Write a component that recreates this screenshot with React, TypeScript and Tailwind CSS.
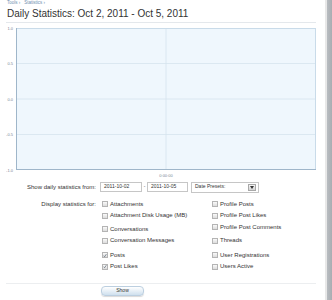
import { Fragment } from 'react';

type Stat = { label: string; checked?: boolean; gap?: string };

const leftStats: Stat[] = [
  { label: 'Attachments' },
  { label: 'Attachment Disk Usage (MB)' },
  { label: 'Conversations', gap: 'mt-[2px]' },
  { label: 'Conversation Messages' },
  { label: 'Posts', checked: true, gap: 'mt-[3px]' },
  { label: 'Post Likes', checked: true },
];

const rightStats: Stat[] = [
  { label: 'Profile Posts' },
  { label: 'Profile Post Likes' },
  { label: 'Profile Post Comments' },
  { label: 'Threads', gap: 'mt-[2px]' },
  { label: 'User Registrations', gap: 'mt-[3px]' },
  { label: 'Users Active' },
];

const yTicks = [
  { label: '1.0', y: 5 },
  { label: '0.5', y: 40.5 },
  { label: '0.0', y: 76 },
  { label: '-0.5', y: 111.5 },
  { label: '-1.0', y: 147 },
];

const Checkbox = ({ checked }: { checked?: boolean }) => (
  <span className="flex h-[6px] w-[6px] shrink-0 items-center justify-center border border-[#b4b4b4] bg-gradient-to-b from-[#fafafa] to-[#dcdcdc]">
    {checked && (
      <svg width="5" height="5" viewBox="0 0 10 10">
        <path d="M1.5 5.5 L4 8 L8.5 1.5" fill="none" stroke="#4a5a6a" strokeWidth="1.6" />
      </svg>
    )}
  </span>
);

const StatColumn = ({ items, width }: { items: Stat[]; width: string }) => (
  <div className={`flex flex-col ${width}`}>
    {items.map((item) => (
      <div key={item.label} className={`flex h-[11.5px] items-center gap-[2px] ${item.gap ?? ''}`}>
        <Checkbox checked={item.checked} />
        <span className="whitespace-nowrap text-[6px] text-[#333]">{item.label}</span>
      </div>
    ))}
  </div>
);

const Chart = () => (
  <svg width="310" height="157" viewBox="0 0 310 157" className="block">
    <rect x="10" y="5" width="300" height="142" fill="#eff7fd" />
    {yTicks.slice(1, 4).map((t) => (
      <line key={t.label} x1="10" x2="310" y1={t.y} y2={t.y} stroke="#d5e3ee" strokeWidth="0.8" />
    ))}
    <line x1="160" x2="160" y1="5" y2="147" stroke="#d5e3ee" strokeWidth="0.8" />
    <line x1="10" x2="310" y1="5.5" y2="5.5" stroke="#c9dbe9" strokeWidth="1" />
    <line x1="309.5" x2="309.5" y1="5" y2="147" stroke="#c9dbe9" strokeWidth="1" />
    <line x1="10.5" x2="10.5" y1="5" y2="147" stroke="#9fb6ca" strokeWidth="1" />
    <line x1="10" x2="310" y1="146.5" y2="146.5" stroke="#9fb6ca" strokeWidth="1" />
    {yTicks.map((t) => (
      <text
        key={t.label}
        x="7"
        y={t.y + 1.5}
        textAnchor="end"
        fontSize="4"
        fill="#7a8694"
        fontFamily="Liberation Sans, Arial, sans-serif"
      >
        {t.label}
      </text>
    ))}
    <text x="160" y="154" textAnchor="middle" fontSize="4" fill="#7a8694" fontFamily="Liberation Sans, Arial, sans-serif">
      0:00:00
    </text>
  </svg>
);

const App = () => {
  return (
    <div
      className="flex h-[300px] w-[332px] overflow-hidden bg-white"
      style={{ fontFamily: '"Liberation Sans", Arial, sans-serif' }}
    >
      <div className="flex flex-1 flex-col pl-[6px] pr-[9px]">
        <div className="flex h-[5px] items-center gap-[2px] pl-[1px] text-[4.5px] leading-[5px] text-[#6f8fb0]">
          <span>Tools ›</span>
          <span className="ml-[2px]">Statistics ›</span>
        </div>

        <h1 className="mt-[3px] border-b border-[#e4e8ec] pb-[2px] pl-[1px] text-[10px] font-normal leading-[12px] text-[#333]">
          Daily Statistics: Oct 2, 2011 - Oct 5, 2011
        </h1>

        <Chart />

        <div className="mt-[1px] flex h-[12px] items-center">
          <label className="w-[90px] text-right text-[6px] text-[#333]">Show daily statistics from:</label>
          <div className="ml-[4px] flex h-[10px] w-[42px] items-center border border-[#c6c6c6] bg-white pl-[3px] text-[5px] text-[#333]">
            2011-10-02
          </div>
          <span className="w-[5px] text-center text-[5px] text-[#555]">-</span>
          <div className="flex h-[10px] w-[41px] items-center border border-[#c6c6c6] bg-white pl-[3px] text-[5px] text-[#333]">
            2011-10-05
          </div>
          <div className="ml-[3px] flex h-[11px] w-[68px] items-center justify-between border border-[#c6c6c6] bg-white pl-[3px] pr-[2px] text-[5px] text-[#333]">
            <span>Date Presets:</span>
            <span className="flex h-[7px] w-[8px] items-center justify-center border border-[#a8a8a8] bg-gradient-to-b from-[#f6f6f6] to-[#d4d4d4]">
              <svg width="4" height="3" viewBox="0 0 4 3">
                <path d="M0 0 H4 L2 3 Z" fill="#333" />
              </svg>
            </span>
          </div>
        </div>

        <div className="mt-[5.5px] flex items-start">
          <label className="flex h-[11.5px] w-[90px] items-center justify-end text-[6px] text-[#333]">
            Display statistics for:
          </label>
          <div className="ml-[6px] flex">
            <StatColumn items={leftStats} width="w-[110px]" />
            <StatColumn items={rightStats} width="w-[100px]" />
          </div>
        </div>

        <Fragment>
          <div className="mt-[10px] border-t border-[#eceef0]" />
          <button className="ml-[95px] mt-[2px] flex h-[10px] w-[43px] items-center justify-center rounded-[4px] border border-[#bccfe0] bg-gradient-to-b from-[#ffffff] to-[#cfe0ee] text-[5px] text-[#333] shadow-[0_1px_1px_rgba(0,0,0,0.15)]">
            Show
          </button>
        </Fragment>
      </div>
      <div className="flex w-[7px]">
        <div className="w-[2px] bg-[#e8e8e8]" />
        <div className="flex-1 bg-gradient-to-r from-[#b8bcc0] to-[#a9adb2]" />
      </div>
    </div>
  );
};

export default App;
